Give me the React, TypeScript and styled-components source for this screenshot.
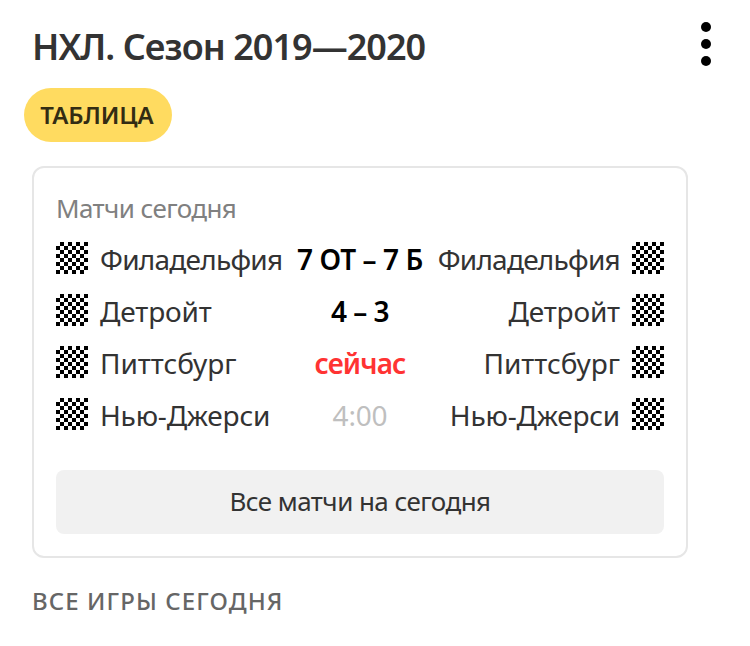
import React from "react";
import styled, { createGlobalStyle } from "styled-components";

const Global = createGlobalStyle`
  * { box-sizing: border-box; }
  body { margin: 0; background: #fff; font-family: "Noto Sans", sans-serif; color: #333; }
`;

const Page = styled.main`
  height: 646px;
  padding: 0 62px 0 32px;
  overflow: hidden;
`;

const Header = styled.header`
  display: flex;
  justify-content: space-between;
  height: 88px;
  margin-right: -30px;
`;

const Title = styled.h1`
  margin: 22px 0 0;
  font-size: 36px;
  line-height: 50px;
  font-weight: 600;
  letter-spacing: -0.97px;
  white-space: nowrap;
`;

const MenuButton = styled.button`
  display: flex;
  height: 68px;
  padding: 20px 6px 0;
  border: 0;
  background: none;
`;

const Tab = styled.button`
  display: block;
  width: 148px;
  height: 54px;
  margin-left: -8px;
  padding: 0 2px 0 0;
  border: 0;
  border-radius: 27px;
  background: #ffdb60;
  color: #332c13;
  font: 600 24px/54px "Noto Sans", sans-serif;
  letter-spacing: -0.05px;
`;

const Card = styled.section`
  width: 656px;
  height: 392px;
  margin-top: 24px;
  padding: 21px 22px 22px;
  border: 2px solid #e6e6e6;
  border-radius: 12px;
`;

const Caption = styled.h2`
  margin: 0 0 3px;
  font-size: 26px;
  line-height: 38px;
  font-weight: 400;
  letter-spacing: -0.6px;
  color: #808080;
`;

const Matches = styled.div`
  height: 240px;
  padding-top: 12px;
`;

const Row = styled.div`
  display: grid;
  grid-template-columns: 226px 156px 226px;
  height: 52px;
`;

const Team = styled.div<{ $away?: boolean; $tracking: number }>`
  display: flex;
  flex-direction: ${(p) => (p.$away ? "row-reverse" : "row")};
  gap: 12px;
  font-size: 28px;
  line-height: 34px;
  letter-spacing: ${(p) => p.$tracking}px;
  white-space: nowrap;
`;

const Emblem = styled.svg`
  display: block;
  flex: none;
  width: 32px;
  height: 32px;
`;

type Status = "final" | "live" | "upcoming";

const statusColors: Record<Status, string> = {
  final: "#000",
  live: "#ff3333",
  upcoming: "#bfbfbf",
};

const Score = styled.div<{ $status: Status; $tracking: number }>`
  text-align: center;
  font-size: 28px;
  line-height: 34px;
  font-weight: ${(p) => (p.$status === "upcoming" ? 400 : 600)};
  letter-spacing: ${(p) => p.$tracking}px;
  color: ${(p) => statusColors[p.$status]};
  white-space: nowrap;
`;

const AllButton = styled.button`
  display: block;
  width: 608px;
  height: 64px;
  padding: 0 0 3px;
  border: 0;
  border-radius: 8px;
  background: #f1f1f1;
  color: #333;
  font: 400 26px/36px "Noto Sans", sans-serif;
  letter-spacing: -0.55px;
`;

const Footer = styled.a`
  display: block;
  margin-top: 25px;
  font-size: 24px;
  line-height: 36px;
  font-weight: 500;
  letter-spacing: 1.1px;
  color: #666;
`;

const cells = Array.from({ length: 64 }, (_, i) => ({ x: i % 8, y: Math.floor(i / 8) })).filter(
  ({ x, y }) => (x + y) % 2 === 1,
);

function Checkers() {
  return (
    <Emblem viewBox="0 0 8 8" shapeRendering="crispEdges">
      {cells.map(({ x, y }) => (
        <rect key={`${x}-${y}`} x={x} y={y} width="1" height="1" />
      ))}
    </Emblem>
  );
}

const matches: { team: string; tracking: number; score: string; scoreTracking: number; status: Status }[] = [
  { team: "Филадельфия", tracking: -0.75, score: "7 ОТ – 7 Б", scoreTracking: -0.4, status: "final" },
  { team: "Детройт", tracking: -0.15, score: "4 – 3", scoreTracking: -0.5, status: "final" },
  { team: "Питтсбург", tracking: -0.05, score: "сейчас", scoreTracking: -0.9, status: "live" },
  { team: "Нью-Джерси", tracking: -0.2, score: "4:00", scoreTracking: -0.2, status: "upcoming" },
];

export default function App() {
  return (
    <>
      <Global />
      <Page>
        <Header>
          <Title>НХЛ. Сезон 2019—2020</Title>
          <MenuButton aria-label="Меню">
            <svg width="12" height="48">
              <circle cx="6" cy="7" r="5" />
              <circle cx="6" cy="24" r="5" />
              <circle cx="6" cy="41" r="5" />
            </svg>
          </MenuButton>
        </Header>
        <Tab>ТАБЛИЦА</Tab>
        <Card>
          <Caption>Матчи сегодня</Caption>
          <Matches>
            {matches.map((m) => (
              <Row key={m.team}>
                <Team $tracking={m.tracking}>
                  <Checkers />
                  <span>{m.team}</span>
                </Team>
                <Score $status={m.status} $tracking={m.scoreTracking}>{m.score}</Score>
                <Team $away $tracking={m.tracking}>
                  <Checkers />
                  <span>{m.team}</span>
                </Team>
              </Row>
            ))}
          </Matches>
          <AllButton>Все матчи на сегодня</AllButton>
        </Card>
        <Footer>ВСЕ ИГРЫ СЕГОДНЯ</Footer>
      </Page>
    </>
  );
}
